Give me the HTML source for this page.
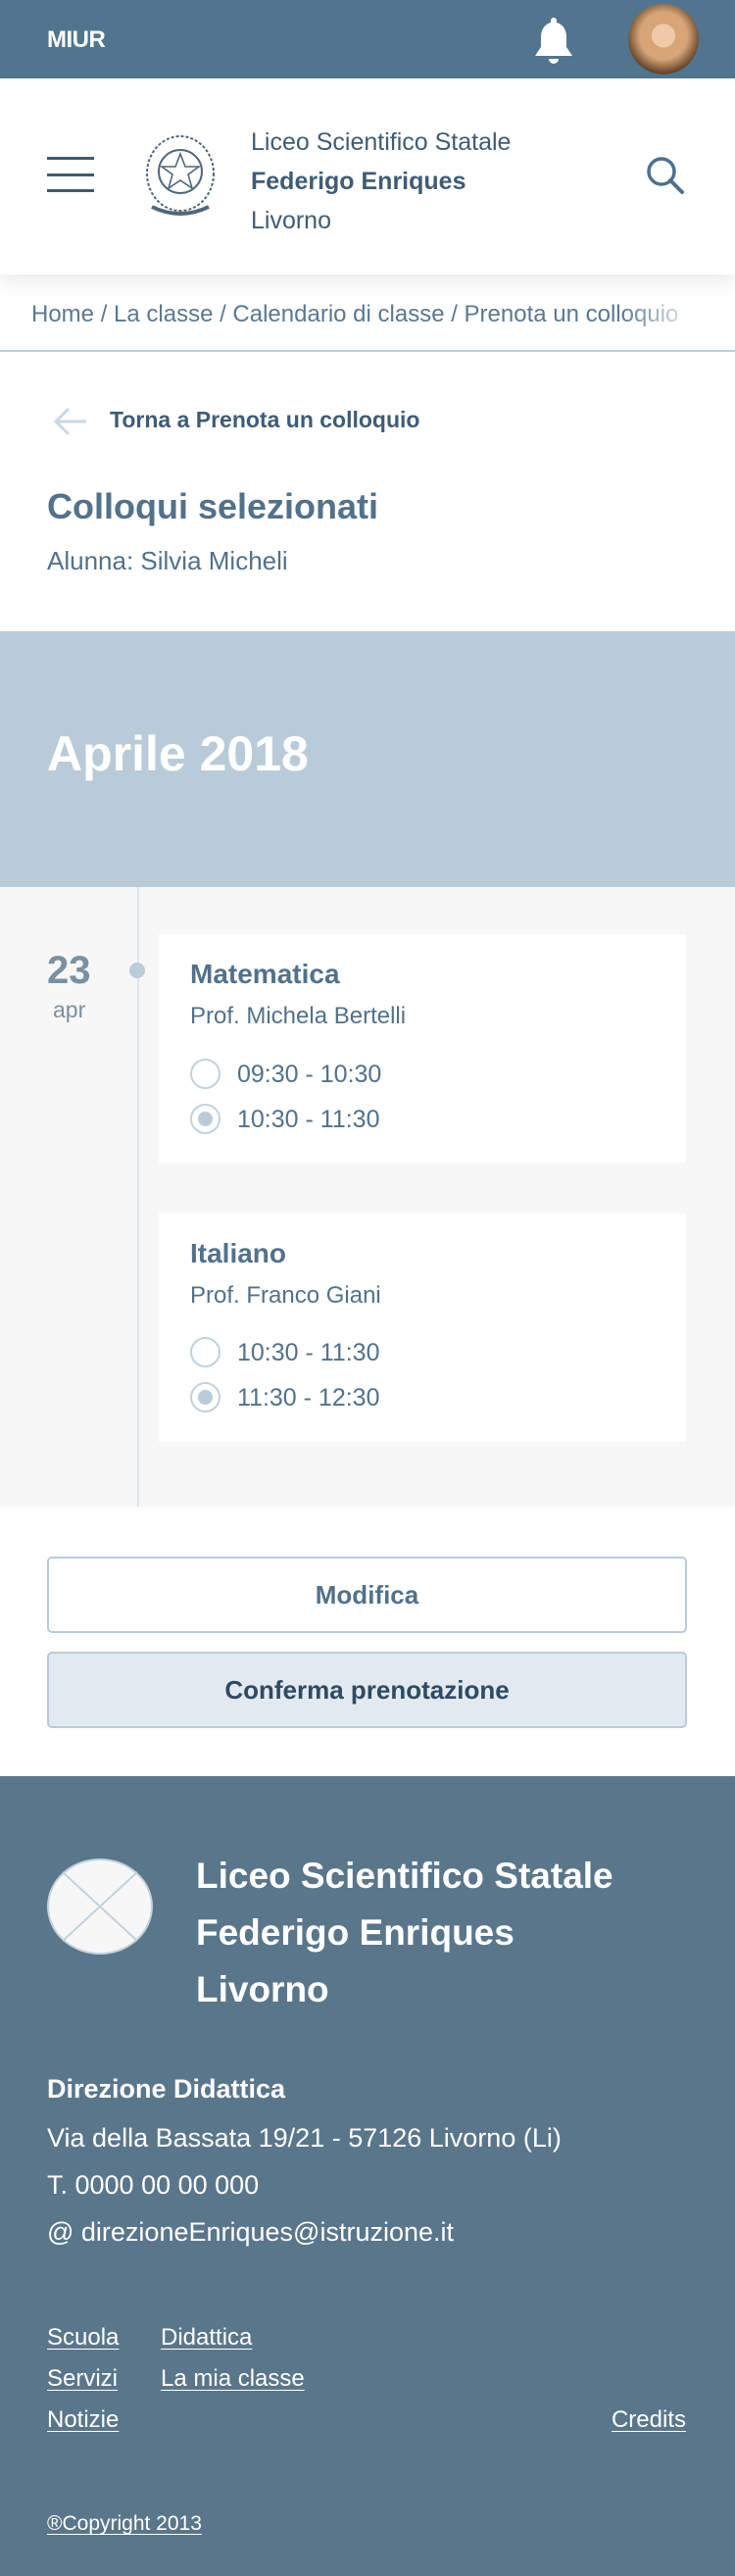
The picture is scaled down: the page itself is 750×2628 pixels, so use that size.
<!DOCTYPE html>
<html><head><meta charset="utf-8"><style>
*{margin:0;padding:0;box-sizing:border-box}
body{width:750px;height:2628px;position:relative;background:#fff;font-family:"Liberation Sans",sans-serif;overflow:hidden}
.a{position:absolute;white-space:nowrap}
.u{text-decoration:underline;text-underline-offset:4px;text-decoration-thickness:1px}
</style></head><body>
<div class="a" style="left:0;top:0;width:750px;height:80px;background:#52758f"></div>
<div class="a" style="left:48px;top:27px;color:#fff;font-weight:bold;font-size:24px;letter-spacing:-0.5px">MIUR</div>
<svg class="a" style="left:543px;top:16px" width="44" height="52" viewBox="0 0 44 52"><path d="M22 2a3 3 0 0 1 3 3v2c7 2 10 8 10 15v10l6 9H3l6-9V22c0-7 3-13 10-15V5a3 3 0 0 1 3-3z" fill="#fff"/><path d="M17 44a5 5 0 0 0 10 0z" fill="#fff"/></svg>
<div class="a" style="left:641px;top:4px;width:72px;height:72px;border-radius:50%;background:radial-gradient(circle at 50% 45%,#f0c9a8 0 22%,#d7a577 23% 45%,#6b4a30 70%,#3b2b20 100%)"></div>
<div class="a" style="left:0;top:80px;width:750px;height:200px;background:#fff;box-shadow:0 10px 18px rgba(0,0,0,0.07)"></div>
<div class="a" style="left:48px;top:160px;width:48px;height:3px;background:#3d5a73"></div>
<div class="a" style="left:48px;top:177px;width:48px;height:3px;background:#3d5a73"></div>
<div class="a" style="left:48px;top:193px;width:48px;height:3px;background:#3d5a73"></div>
<svg class="a" style="left:143px;top:133px" width="82" height="92" viewBox="0 0 82 92"><ellipse cx="41" cy="44" rx="34" ry="38" fill="none" stroke="#51677b" stroke-width="2" stroke-dasharray="3 2"/><circle cx="41" cy="42" r="22" fill="none" stroke="#51677b" stroke-width="2"/><path d="M41 24l5 13h14l-11 8 4 14-12-8-12 8 4-14-11-8h14z" fill="none" stroke="#51677b" stroke-width="1.6"/><path d="M12 78q29 14 58 0" fill="none" stroke="#51677b" stroke-width="4"/></svg>
<div class="a" style="left:256px;top:131px;color:#3f5c75;font-size:25px">Liceo Scientifico Statale</div>
<div class="a" style="left:256px;top:171px;color:#3f5c75;font-size:25px;font-weight:bold">Federigo Enriques</div>
<div class="a" style="left:256px;top:211px;color:#3f5c75;font-size:25px">Livorno</div>
<svg class="a" style="left:658px;top:158px" width="42" height="42" viewBox="0 0 42 42"><circle cx="17" cy="17" r="13" fill="none" stroke="#4d7190" stroke-width="3.5"/><path d="M26 26l12 12" stroke="#4d7190" stroke-width="4" stroke-linecap="round"/></svg>
<div class="a" style="left:32px;top:307px;width:684px;overflow:hidden;color:#5b7891;font-size:24px;-webkit-mask-image:linear-gradient(90deg,#000 88%,transparent)">Home / La classe / Calendario di classe / Prenota un colloquio</div>
<div class="a" style="left:0;top:357px;width:750px;height:2px;background:#c0d0dc"></div>
<svg class="a" style="left:54px;top:414px" width="36" height="32" viewBox="0 0 36 32"><path d="M34 16H4M16 3L3 16l13 13" fill="none" stroke="#c9d8e4" stroke-width="3"/></svg>
<div class="a" style="left:112px;top:415px;color:#3f5c75;font-size:23px;font-weight:bold">Torna a Prenota un colloquio</div>
<div class="a" style="left:48px;top:496px;color:#52718b;font-size:36px;font-weight:bold">Colloqui selezionati</div>
<div class="a" style="left:48px;top:557px;color:#52718b;font-size:26px">Alunna: Silvia Micheli</div>
<div class="a" style="left:0;top:644px;width:750px;height:261px;background:#b9cbd8"></div>
<div class="a" style="left:48px;top:740px;color:#fff;font-size:50px;font-weight:bold">Aprile 2018</div>
<div class="a" style="left:0;top:905px;width:750px;height:632px;background:#f7f7f7"></div>
<div class="a" style="left:140px;top:905px;width:2px;height:632px;background:#dfe6ec"></div>
<div class="a" style="left:48px;top:968px;color:#7a90a3;font-size:40px;font-weight:bold">23</div>
<div class="a" style="left:54px;top:1017px;color:#7a90a3;font-size:23px">apr</div>
<div class="a" style="left:132px;top:982px;width:16px;height:16px;border-radius:50%;background:#bccbd8"></div>
<div class="a" style="left:162px;top:953px;width:538px;height:233px;background:#fff"></div>
<div class="a" style="left:162px;top:1238px;width:538px;height:233px;background:#fff"></div>
<div class="a" style="left:194px;top:978px;color:#52718b;font-size:28px;font-weight:bold">Matematica</div>
<div class="a" style="left:194px;top:1023px;color:#52718b;font-size:24px">Prof. Michela Bertelli</div>
<div class="a" style="left:194px;top:1080px;width:31px;height:31px;border-radius:50%;border:2px solid #c3d1dd;background:#fff"></div>
<div class="a" style="left:242px;top:1082px;color:#52718b;font-size:25px">09:30 - 10:30</div>
<div class="a" style="left:194px;top:1126px;width:31px;height:31px;border-radius:50%;border:2px solid #c3d1dd;background:radial-gradient(circle,#b9cbd8 0 7px,#fff 8px)"></div>
<div class="a" style="left:242px;top:1128px;color:#52718b;font-size:25px">10:30 - 11:30</div>
<div class="a" style="left:194px;top:1263px;color:#52718b;font-size:28px;font-weight:bold">Italiano</div>
<div class="a" style="left:194px;top:1308px;color:#52718b;font-size:24px">Prof. Franco Giani</div>
<div class="a" style="left:194px;top:1364px;width:31px;height:31px;border-radius:50%;border:2px solid #c3d1dd;background:#fff"></div>
<div class="a" style="left:242px;top:1366px;color:#52718b;font-size:25px">10:30 - 11:30</div>
<div class="a" style="left:194px;top:1410px;width:31px;height:31px;border-radius:50%;border:2px solid #c3d1dd;background:radial-gradient(circle,#b9cbd8 0 7px,#fff 8px)"></div>
<div class="a" style="left:242px;top:1412px;color:#52718b;font-size:25px">11:30 - 12:30</div>
<div class="a" style="left:48px;top:1588px;width:653px;height:78px;border:2px solid #b9cbd8;border-radius:5px;background:#fff;color:#52718b;font-size:26px;font-weight:bold;text-align:center;line-height:74px">Modifica</div>
<div class="a" style="left:48px;top:1685px;width:653px;height:78px;border:2px solid #b9cbd8;border-radius:5px;background:#e3e9f0;color:#2f4a62;font-size:26px;font-weight:bold;text-align:center;line-height:74px">Conferma prenotazione</div>
<div class="a" style="left:0;top:1812px;width:750px;height:816px;background:#5a768b"></div>
<svg class="a" style="left:47px;top:1890px" width="110" height="110" viewBox="0 0 110 110"><ellipse cx="55" cy="55" rx="53" ry="48" fill="#f7f7f7" stroke="#c3d1dd" stroke-width="2"/><path d="M17 20L93 90M93 20L17 90" stroke="#c3d1dd" stroke-width="2"/></svg>
<div class="a" style="left:200px;top:1885px;color:#fff;font-size:37px;font-weight:bold;line-height:58px">Liceo Scientifico Statale<br>Federigo Enriques<br>Livorno</div>
<div class="a" style="left:48px;top:2116px;color:#fff;font-size:27px;font-weight:bold">Direzione Didattica</div>
<div class="a" style="left:48px;top:2157px;color:#fff;font-size:27px;line-height:48px">Via della Bassata 19/21 - 57126 Livorno (Li)<br>T. 0000 00 00 000<br>@ direzioneEnriques@istruzione.it</div>
<div class="a u" style="left:48px;top:2371px;color:#fff;font-size:24px">Scuola</div>
<div class="a u" style="left:164px;top:2371px;color:#fff;font-size:24px">Didattica</div>
<div class="a u" style="left:48px;top:2413px;color:#fff;font-size:24px">Servizi</div>
<div class="a u" style="left:164px;top:2413px;color:#fff;font-size:24px">La mia classe</div>
<div class="a u" style="left:48px;top:2455px;color:#fff;font-size:24px">Notizie</div>
<div class="a u" style="right:50px;top:2455px;color:#fff;font-size:24px">Credits</div>
<div class="a u" style="left:48px;top:2563px;color:#fff;font-size:21px">®Copyright 2013</div>
</body></html>
